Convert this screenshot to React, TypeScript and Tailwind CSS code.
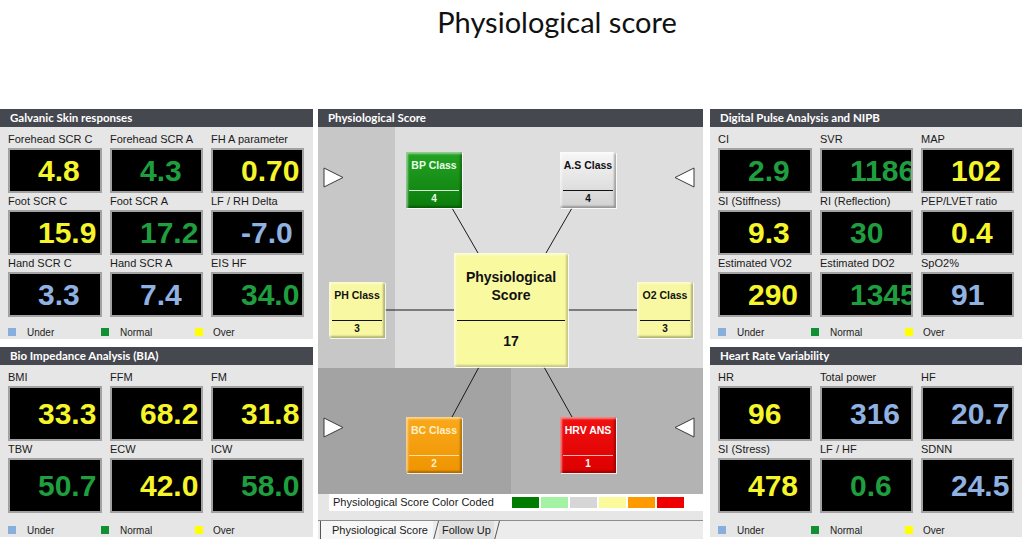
import type { ReactNode } from "react";

type Tone = "y" | "g" | "b";

interface Reading {
  label: string;
  value: string;
  tone: Tone;
}

const toneClass: Record<Tone, string> = {
  y: "text-[#f5f52a]",
  g: "text-[#1f9e3f]",
  b: "text-[#8fb2e2]",
};

const gsr: Reading[] = [
  { label: "Forehead SCR C", value: "4.8", tone: "y" },
  { label: "Forehead SCR A", value: "4.3", tone: "g" },
  { label: "FH A parameter", value: "0.70", tone: "y" },
  { label: "Foot SCR C", value: "15.9", tone: "y" },
  { label: "Foot SCR A", value: "17.2", tone: "g" },
  { label: "LF / RH Delta", value: "-7.0", tone: "b" },
  { label: "Hand SCR C", value: "3.3", tone: "b" },
  { label: "Hand SCR A", value: "7.4", tone: "b" },
  { label: "EIS HF", value: "34.0", tone: "g" },
];

const bia: Reading[] = [
  { label: "BMI", value: "33.3", tone: "y" },
  { label: "FFM", value: "68.2", tone: "y" },
  { label: "FM", value: "31.8", tone: "y" },
  { label: "TBW", value: "50.7", tone: "g" },
  { label: "ECW", value: "42.0", tone: "y" },
  { label: "ICW", value: "58.0", tone: "g" },
];

const dpa: Reading[] = [
  { label: "CI", value: "2.9", tone: "g" },
  { label: "SVR", value: "1186", tone: "g" },
  { label: "MAP", value: "102", tone: "y" },
  { label: "SI (Stiffness)", value: "9.3", tone: "y" },
  { label: "RI (Reflection)", value: "30", tone: "g" },
  { label: "PEP/LVET ratio", value: "0.4", tone: "y" },
  { label: "Estimated VO2", value: "290", tone: "y" },
  { label: "Estimated DO2", value: "1345", tone: "g" },
  { label: "SpO2%", value: "91", tone: "b" },
];

const hrv: Reading[] = [
  { label: "HR", value: "96", tone: "y" },
  { label: "Total power", value: "316", tone: "b" },
  { label: "HF", value: "20.7", tone: "b" },
  { label: "SI (Stress)", value: "478", tone: "y" },
  { label: "LF / HF", value: "0.6", tone: "g" },
  { label: "SDNN", value: "24.5", tone: "b" },
];

const Tile = ({ reading, tall }: { reading: Reading; tall?: boolean }) => (
  <div className="flex flex-col">
    <div className="h-[17px] whitespace-nowrap text-[11px] leading-[17px] text-[#1a1a1a]">
      {reading.label}
    </div>
    <div
      className={`flex items-center overflow-hidden border-2 border-[#a2a2a2] bg-black pl-[28px] ${
        tall ? "h-[55px]" : "h-[45px]"
      }`}
    >
      <span
        className={`whitespace-nowrap text-[30px] font-bold leading-none ${toneClass[reading.tone]}`}
      >
        {reading.value}
      </span>
    </div>
  </div>
);

const Legend = ({ className }: { className: string }) => (
  <div className={`flex h-[12px] items-center pl-[8px] text-[10px] text-[#222] ${className}`}>
    <div className="flex w-[93px] items-center gap-[11px]">
      <span className="h-[8px] w-[8px] bg-[#8aaedc]" />
      Under
    </div>
    <div className="flex w-[94px] items-center gap-[11px]">
      <span className="h-[8px] w-[8px] bg-[#119033]" />
      Normal
    </div>
    <div className="flex items-center gap-[10px]">
      <span className="h-[8px] w-[8px] bg-[#ffff00]" />
      Over
    </div>
  </div>
);

const Panel = ({ title, children }: { title: string; children: ReactNode }) => (
  <section className="flex flex-col bg-[#e6e6e6]">
    <header className="h-[18px] bg-[#46484f] pl-[10px] font-['Lato',sans-serif] text-[11.5px] font-bold leading-[18px] text-white">
      {title}
    </header>
    {children}
  </section>
);

const Grid = ({ items, tall }: { items: Reading[]; tall?: boolean }) => (
  <div className="grid grid-cols-[94px_93px_93px] gap-x-[8px] px-[8px] pt-[4px]">
    {items.map((r) => (
      <Tile key={r.label} reading={r} tall={tall} />
    ))}
  </div>
);

interface NodeProps {
  label: string;
  score: string;
  box: string;
  rule: string;
}

const ClassNode = ({ label, score, box, rule }: NodeProps) => (
  <div
    className={`absolute flex h-[56px] w-[56px] flex-col items-center shadow-[inset_2px_2px_2px_rgba(255,255,255,0.5),inset_-2px_-2px_2px_rgba(0,0,0,0.28),1px_1px_0_rgba(255,255,255,0.8)] ${box}`}
  >
    <div className="mt-[7px] whitespace-nowrap text-[10.5px] font-bold leading-[12px]">{label}</div>
    <div className={`mt-[19px] h-px w-[50px] ${rule}`} />
    <div className="mt-[2px] text-[10px] font-bold leading-[12px]">{score}</div>
  </div>
);

const Arrow = ({ pos, left }: { pos: string; left?: boolean }) => (
  <svg className={`absolute ${pos}`} width="21" height="21" viewBox="0 0 21 21">
    <polygon
      points={left ? "20,1 1,10.5 20,20" : "1,1 20,10.5 1,20"}
      fill="#ffffff"
      stroke="#3a3a3a"
      strokeWidth="1"
    />
  </svg>
);

const Slash = () => (
  <svg width="6" height="19" viewBox="0 0 6 19" className="shrink-0">
    <line x1="0.5" y1="19" x2="5.5" y2="0" stroke="#555" strokeWidth="1" />
  </svg>
);

const scale = ["bg-[#007c00]", "bg-[#a4f2a4]", "bg-[#d6d6d6]", "bg-[#fbfb9c]", "bg-[#ff9900]", "bg-[#ee0000]"];

const ScoreDiagram = () => (
  <section className="flex flex-col bg-[#e6e6e6]">
    <header className="h-[18px] bg-[#46484f] pl-[10px] font-['Lato',sans-serif] text-[11.5px] font-bold leading-[18px] text-white">
      Physiological Score
    </header>
    <div className="relative">
      <div className="flex h-[241px]">
        <div className="w-[77px] bg-[#c7c7c7]" />
        <div className="flex-1 bg-[#dedede]" />
      </div>
      <div className="flex h-[126px]">
        <div className="w-[193px] bg-[#a3a3a3]" />
        <div className="flex-1 bg-[#b3b3b3]" />
      </div>

      <svg className="absolute left-0 top-0" width="385" height="367">
        <g stroke="#1a1a1a" strokeWidth="1">
          <line x1="134" y1="81" x2="160" y2="126" />
          <line x1="254" y1="81" x2="228" y2="126" />
          <line x1="67" y1="183" x2="136" y2="183" />
          <line x1="250" y1="183" x2="319" y2="183" />
          <line x1="161" y1="240" x2="134" y2="290" />
          <line x1="226" y1="240" x2="254" y2="290" />
        </g>
      </svg>

      <Arrow pos="left-[5px] top-[40px]" />
      <Arrow pos="left-[356px] top-[40px]" left />
      <Arrow pos="left-[5px] top-[290px]" />
      <Arrow pos="left-[356px] top-[290px]" left />

      <ClassNode
        label="BP Class"
        score="4"
        box="left-[88px] top-[25px] bg-gradient-to-b from-[#23a323] to-[#0b7d0b] text-[#e8ffe8]"
        rule="bg-[#d8f0d8]"
      />
      <ClassNode
        label="A.S Class"
        score="4"
        box="left-[242px] top-[25px] bg-gradient-to-b from-[#f7f7f7] to-[#d2d2d2] text-[#111]"
        rule="bg-[#111]"
      />
      <ClassNode
        label="PH Class"
        score="3"
        box="left-[11px] top-[155px] bg-[#f8f8a2] text-[#111]"
        rule="bg-[#111]"
      />
      <ClassNode
        label="O2 Class"
        score="3"
        box="left-[319px] top-[155px] bg-[#f8f8a2] text-[#111]"
        rule="bg-[#111]"
      />
      <ClassNode
        label="BC Class"
        score="2"
        box="left-[88px] top-[290px] bg-gradient-to-b from-[#f9a91a] to-[#ef9400] text-[#fff0c8]"
        rule="bg-[#ffe0a0]"
      />
      <ClassNode
        label="HRV ANS"
        score="1"
        box="left-[242px] top-[290px] bg-gradient-to-b from-[#f01010] to-[#dd0000] text-white"
        rule="bg-[#ffb0b0]"
      />

      <div className="absolute left-[136px] top-[126px] flex h-[114px] w-[114px] flex-col items-center bg-[#f9f9a0] text-[#111] shadow-[inset_2px_2px_2px_rgba(255,255,255,0.6),inset_-2px_-2px_2px_rgba(0,0,0,0.2),1px_1px_0_rgba(255,255,255,0.8)]">
        <div className="mt-[15px] text-center text-[14px] font-bold leading-[18px]">
          Physiological
          <br />
          Score
        </div>
        <div className="mt-[16px] h-px w-[108px] bg-[#111]" />
        <div className="mt-[12px] text-[14px] font-bold leading-[16px]">17</div>
      </div>
    </div>

    <div className="flex h-[17px] pl-[11px]">
      <div className="flex flex-1 items-center justify-between bg-white pl-[4px] pr-[19px]">
        <span className="text-[11px] text-[#1a1a1a]">Physiological Score Color Coded</span>
        <div className="flex gap-[2px]">
          {scale.map((c) => (
            <span key={c} className={`h-[11px] w-[27px] ${c}`} />
          ))}
        </div>
      </div>
    </div>

    <div className="h-[28px] pt-[9px]">
      <div className="flex h-[19px] items-stretch border-t border-[#8c8c8c] bg-[#ececec] pl-[2px] text-[11px] text-[#1a1a1a]">
        <div className="flex items-center border-l border-[#555] bg-[#f7f7f7] pl-[11px] pr-[5px]">
          Physiological Score
        </div>
        <Slash />
        <div className="flex items-center bg-[#e0e0e0] pl-[3px] pr-[3px]">Follow Up</div>
        <Slash />
      </div>
    </div>
  </section>
);

export default function App() {
  return (
    <div className="h-[539px] w-[1024px] overflow-hidden bg-white font-['Liberation_Sans',Arial,sans-serif]">
      <div className="flex h-[109px] justify-center pl-[90px] pt-[3px]">
        <h1 className="font-['Lato',sans-serif] text-[29px] font-normal leading-[38px] text-[#111]">
          Physiological score
        </h1>
      </div>
      <div className="flex">
        <div className="flex w-[313px] flex-col gap-[8px]">
          <Panel title="Galvanic Skin responses">
            <Grid items={gsr} />
            <Legend className="mb-[1px] mt-[9px]" />
          </Panel>
          <Panel title="Bio Impedance Analysis (BIA)">
            <Grid items={bia} tall />
            <Legend className="mb-[1px] mt-[11px]" />
          </Panel>
        </div>
        <div className="ml-[5px] w-[385px]">
          <ScoreDiagram />
        </div>
        <div className="ml-[7px] flex w-[312px] flex-col gap-[8px]">
          <Panel title="Digital Pulse Analysis and NIPB">
            <Grid items={dpa} />
            <Legend className="mb-[1px] mt-[9px]" />
          </Panel>
          <Panel title="Heart Rate Variability">
            <Grid items={hrv} tall />
            <Legend className="mb-[1px] mt-[11px]" />
          </Panel>
        </div>
      </div>
    </div>
  );
}
